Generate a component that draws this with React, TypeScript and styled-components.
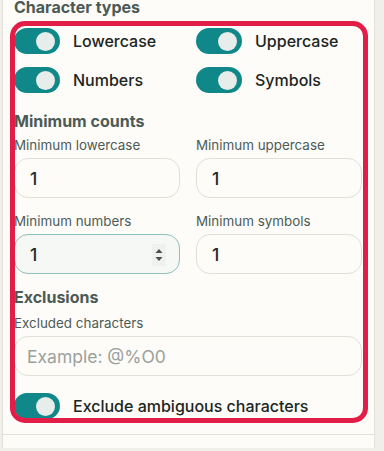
import React from 'react';
import styled, { createGlobalStyle } from 'styled-components';

const GlobalStyle = createGlobalStyle`
    html, body {
        margin: 0;
        padding: 0;
        background: #f0efe9;
        font-family: 'Inter', 'Noto Sans', sans-serif;
        overflow: hidden;
    }
`;

const Panel = styled.div`
    position: relative;
    margin-left: 2px;
    width: 373px;
    height: 451px;
    background: #fdfcf8;
    border-left: 1px solid #e2e0d8;
    border-right: 1px solid #e2e0d8;
    box-sizing: border-box;
`;

const Section = styled.div`
    padding: 0 12px 0 11px;
    margin-top: -3px;
`;

const Heading = styled.div<{ $top?: number }>`
    font-size: 16px;
    line-height: 20px;
    font-weight: 700;
    color: #4b5a55;
    margin-top: ${p => p.$top ?? 0}px;
`;

const ToggleGrid = styled.div`
    display: grid;
    grid-template-columns: 1fr 1fr;
    column-gap: 16px;
    row-gap: 13px;
    margin-top: 11px;
`;

const ToggleRow = styled.label<{ $top?: number }>`
    display: flex;
    align-items: center;
    gap: 13px;
    margin-top: ${p => p.$top ?? 0}px;
    font-size: 16px;
    font-weight: 500;
    color: #1b2522;
`;

const Track = styled.span`
    position: relative;
    flex: none;
    width: 46px;
    height: 26px;
    border-radius: 13px;
    background: #10888a;
`;

const Knob = styled.span`
    position: absolute;
    left: 22px;
    top: 3.5px;
    width: 19px;
    height: 19px;
    border-radius: 50%;
    background: #e7edea;
`;

const FieldGrid = styled.div`
    display: grid;
    grid-template-columns: 1fr 1fr;
    column-gap: 16px;
    row-gap: 15px;
    margin-top: 6px;
`;

const Field = styled.div<{ $top?: number }>`
    display: flex;
    flex-direction: column;
    gap: 5px;
    margin-top: ${p => p.$top ?? 0}px;
`;

const Label = styled.div`
    font-size: 13.4px;
    line-height: 16px;
    color: #4d5b57;
`;

const InputBox = styled.div<{ $focused?: boolean; $placeholder?: boolean }>`
    position: relative;
    height: 40px;
    box-sizing: border-box;
    border-radius: 14px;
    border: 1px solid ${p => (p.$focused ? '#8fc0bb' : '#e1dfd7')};
    background: ${p => (p.$focused ? '#f5f8f5' : '#fdfcf9')};
    display: flex;
    align-items: center;
    padding: 0 12px;
    font-size: 17.5px;
    font-weight: ${p => (p.$placeholder ? 400 : 500)};
    color: ${p => (p.$placeholder ? '#9ba19d' : '#1d2a27')};
`;

const Value = styled.span`
    padding-left: 3px;
`;

const Spinner = styled.span`
    position: absolute;
    right: 13px;
    top: 9px;
    width: 14px;
    height: 22px;
    background: #eef1ee;
    display: flex;
    align-items: center;
    justify-content: center;
`;

const Separator = styled.div`
    height: 1px;
    background: #e2e0d8;
    margin-top: 15px;
`;

const Highlight = styled.div`
    position: absolute;
    left: 7px;
    top: 24px;
    width: 358px;
    height: 402px;
    box-sizing: border-box;
    border: 5px solid #e11d48;
    border-radius: 15px;
    pointer-events: none;
`;

function Toggle({ label, top }: { label: string; top?: number }) {
    return (
        <ToggleRow $top={top}>
            <Track><Knob /></Track>
            {label}
        </ToggleRow>
    );
}

export default function App() {
    return (
        <>
            <GlobalStyle />
            <Panel>
                <Section>
                    <Heading>Character types</Heading>
                    <ToggleGrid>
                        <Toggle label="Lowercase" />
                        <Toggle label="Uppercase" />
                        <Toggle label="Numbers" />
                        <Toggle label="Symbols" />
                    </ToggleGrid>

                    <Heading $top={18}>Minimum counts</Heading>
                    <FieldGrid>
                        <Field>
                            <Label>Minimum lowercase</Label>
                            <InputBox><Value>1</Value></InputBox>
                        </Field>
                        <Field>
                            <Label>Minimum uppercase</Label>
                            <InputBox><Value>1</Value></InputBox>
                        </Field>
                        <Field>
                            <Label>Minimum numbers</Label>
                            <InputBox $focused>
                                <Value>1</Value>
                                <Spinner>
                                    <svg width="8" height="16" viewBox="0 0 8 16">
                                        <path d="M4 2 L7.5 6 L0.5 6 Z" fill="#4a4f4d" />
                                        <path d="M4 14 L7.5 10 L0.5 10 Z" fill="#4a4f4d" />
                                    </svg>
                                </Spinner>
                            </InputBox>
                        </Field>
                        <Field>
                            <Label>Minimum symbols</Label>
                            <InputBox><Value>1</Value></InputBox>
                        </Field>
                    </FieldGrid>

                    <Heading $top={13}>Exclusions</Heading>
                    <Field $top={8}>
                        <Label>Excluded characters</Label>
                        <InputBox $placeholder>Example: @%O0</InputBox>
                    </Field>
                    <Toggle label="Exclude ambiguous characters" top={17} />
                </Section>
                <Separator />
                <Section>
                    <Heading $top={13}>Presets</Heading>
                </Section>
                <Highlight />
            </Panel>
        </>
    );
}
